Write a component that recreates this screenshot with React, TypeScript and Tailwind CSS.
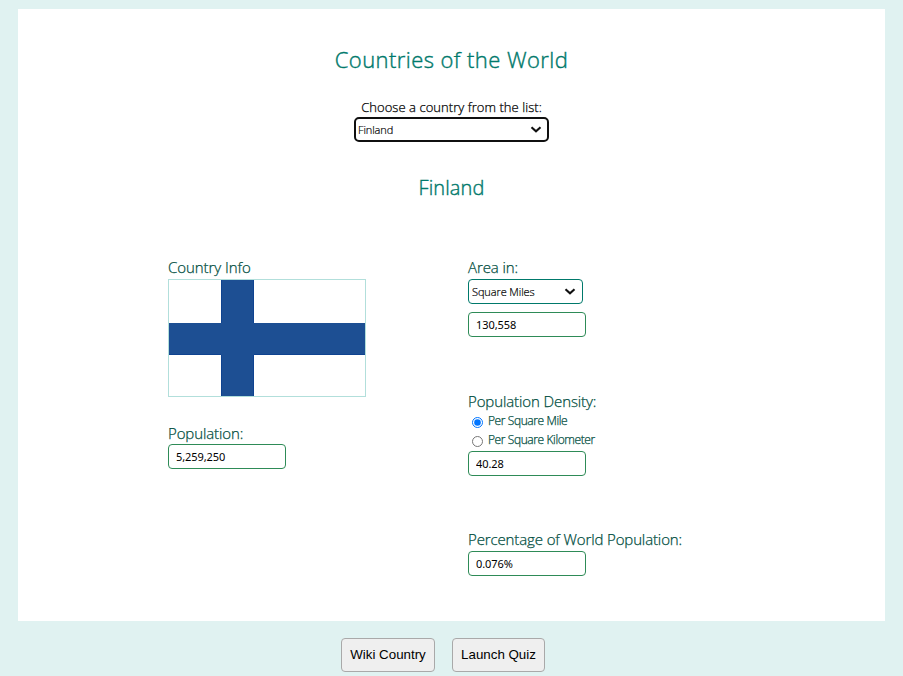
import { useState } from "react";
import type { ReactNode } from "react";

const uiFont = "font-['Open_Sans','Noto_Sans',sans-serif]";

function Chevron() {
  return (
    <svg className="pointer-events-none absolute right-[7px] top-1/2 -mt-[4px] h-[8px] w-[12px]" viewBox="0 0 12 8" fill="none">
      <path d="M1.5 1.2 L6 5.3 L10.5 1.2" stroke="#101010" strokeWidth="2.1" />
    </svg>
  );
}

function Label({ children, className = "" }: { children: ReactNode; className?: string }) {
  return (
    <div className={`h-[22px] whitespace-nowrap pb-[2px] text-[15px] font-light leading-[20px] text-[#004d40] [-webkit-text-stroke:0.25px] ${className}`}>
      {children}
    </div>
  );
}

function Output({ value }: { value: string }) {
  return (
    <input
      readOnly
      value={value}
      className="block h-[25px] w-[118px] rounded-[4px] border border-[#2e8b57] bg-white px-[7px] pb-px font-['Noto_Sans',sans-serif] text-[11px] tracking-[-0.08px] text-black outline-none"
    />
  );
}

function Radio({ label, checked, onSelect }: { label: string; checked: boolean; onSelect: () => void }) {
  return (
    <label className="flex h-[19px] items-center pl-[4px]">
      <input type="radio" name="density" checked={checked} onChange={onSelect} className="mr-[5px] size-[11px] shrink-0" />
      <span className="whitespace-nowrap pb-[3px] text-[12px] font-light leading-[16px] tracking-[-0.4px] text-[#004d40] [-webkit-text-stroke:0.25px]">{label}</span>
    </label>
  );
}

function Flag() {
  return (
    <svg className="block h-[118px] w-[198px] border border-[#b2dfdb] bg-white" viewBox="0 0 196 116" shapeRendering="crispEdges">
      <path d="M52 0H85V116H52Z M0 43H196V75H0Z" fill="#1d4f93" />
      <path d="M52 0h1v43h-1z M52 75h1v41h-1z M84 0h1v43h-1z M84 75h1v41h-1z M0 74h52v1H0z M85 74h111v1H85z" fill="#0f4390" />
    </svg>
  );
}

export default function App() {
  const [perMile, setPerMile] = useState(true);
  const button =
    "h-[34px] whitespace-nowrap rounded-[4px] border border-[#a9a9a9] bg-[#efefef] font-['Liberation_Sans',Arial,sans-serif] text-[13.333px] text-black";
  return (
    <div className={`h-[676px] w-[903px] overflow-hidden bg-[#e0f2f1] px-[18px] pt-[9px] ${uiFont}`}>
      <main className="flex h-[612px] flex-col items-center bg-white pt-[34px]">
        <h1 className="h-[33px] whitespace-nowrap text-[22px] font-light leading-[32px] tracking-[0.43px] text-[#00796b] [-webkit-text-stroke:0.4px]">Countries of the World</h1>
        <label htmlFor="country" className="mt-[21px] h-[20px] whitespace-nowrap text-[13px] font-light leading-[20px] tracking-[0.05px] text-black [-webkit-text-stroke:0.25px]">
          Choose a country from the list:
        </label>
        <div className="relative h-[25px] w-[195px]">
          <select
            id="country"
            className="block h-full w-full appearance-none rounded-[5px] border-2 border-[#101010] bg-white pl-[2px] pt-px text-[11px] font-light tracking-[-0.1px] text-black outline-none [-webkit-text-stroke:0.2px]"
          >
            <option>Finland</option>
          </select>
          <Chevron />
        </div>
        <h2 className="mt-[31px] h-[30px] text-[20px] font-light leading-[30px] tracking-[0.1px] text-[#00796b] [-webkit-text-stroke:0.4px]">Finland</h2>
        <div className="mt-[54px] grid w-[567px] grid-cols-[300px_267px]">
          <section>
            <Label className="tracking-[-0.05px]">Country Info</Label>
            <Flag />
            <Label className="mt-[25px] pt-px tracking-[-0.1px]">Population:</Label>
            <Output value="5,259,250" />
          </section>
          <section>
            <Label className="tracking-[-0.08px]">Area in:</Label>
            <div className="relative mb-[8px] h-[25px] w-[115px]">
              <select className="block h-full w-full appearance-none rounded-[4px] border border-[#00796b] bg-white pl-[3px] pt-px text-[11px] font-light tracking-[-0.1px] text-black outline-none [-webkit-text-stroke:0.2px]">
                <option>Square Miles</option>
              </select>
              <Chevron />
            </div>
            <Output value="130,558" />
            <Label className="mt-[54px] tracking-[-0.1px]">Population Density:</Label>
            <Radio label="Per Square Mile" checked={perMile} onSelect={() => setPerMile(true)} />
            <Radio label="Per Square Kilometer" checked={!perMile} onSelect={() => setPerMile(false)} />
            <Output value="40.28" />
            <Label className="mt-[53px] tracking-[-0.12px]">Percentage of World Population:</Label>
            <Output value="0.076%" />
          </section>
        </div>
      </main>
      <footer className="ml-[323px] mt-[17px] flex gap-[17px]">
        <button className={`${button} w-[94px]`}>Wiki Country</button>
        <button className={`${button} w-[93px]`}>Launch Quiz</button>
      </footer>
    </div>
  );
}
